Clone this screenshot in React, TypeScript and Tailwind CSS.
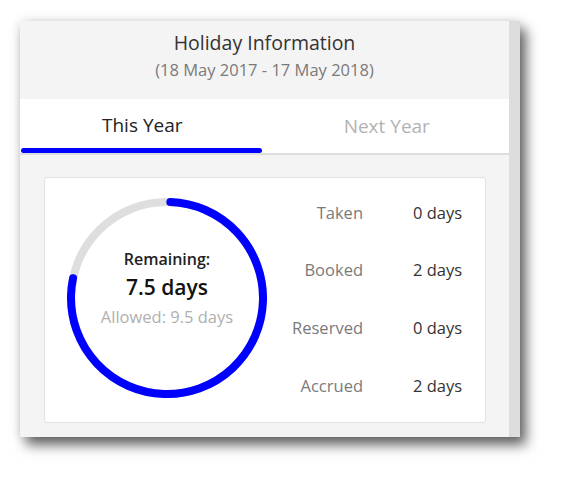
import React from 'react';

const STATS: { label: string; value: string }[] = [
    { label: 'Taken', value: '0 days' },
    { label: 'Booked', value: '2 days' },
    { label: 'Reserved', value: '0 days' },
    { label: 'Accrued', value: '2 days' },
];

const RADIUS = 96;
const CIRC = 2 * Math.PI * RADIUS;

// Ring: grey track, blue arc for remaining / allowed, starting at 12 o'clock
const RemainingRing = ({ remaining, allowed }: { remaining: number; allowed: number }) => {
    const arc = (remaining / allowed) * CIRC - 8;
    return (
        <div className="relative w-[200px] h-[200px] shrink-0">
            <svg width="200" height="200" viewBox="0 0 200 200" className="block">
                <circle cx="100" cy="100" r={RADIUS} fill="none" stroke="#dedede" strokeWidth="8" />
                <circle
                    cx="100"
                    cy="100"
                    r={RADIUS}
                    fill="none"
                    stroke="#0000ff"
                    strokeWidth="8"
                    strokeLinecap="round"
                    strokeDasharray={`${arc} ${CIRC}`}
                    transform="rotate(-88 100 100)"
                />
            </svg>
            <div className="absolute inset-0 flex flex-col items-center pt-[49px]">
                <span className="text-[16px] leading-[24px] font-semibold text-[#222222]">Remaining:</span>
                <span className="text-[21px] leading-[32px] font-semibold text-[#111111]">{remaining} days</span>
                <span className="text-[16.5px] leading-[27px] text-[#b0b0b0]">Allowed: {allowed} days</span>
            </div>
        </div>
    );
};

const App = () => {
    return (
        <div className="w-[562px] h-[480px] bg-white pt-[21px] pl-[20px] font-['Open_Sans',sans-serif]">
            <div className="flex w-[500px] h-[416px] shadow-[6px_8px_12px_rgba(0,0,0,0.6),0_0_10px_rgba(0,0,0,0.12)]">
                <div className="flex flex-col w-[489px]">
                    {/* Header */}
                    <div className="h-[78px] bg-[#f4f4f4] flex flex-col items-center pt-[9px]">
                        <span className="text-[19.5px] leading-[26px] text-[#333333]">Holiday Information</span>
                        <span className="text-[16.5px] leading-[28px] text-[#7a7a7a]">(18 May 2017 - 17 May 2018)</span>
                    </div>

                    {/* Tabs */}
                    <div className="h-[54px] bg-white flex">
                        <div className="w-1/2 flex flex-col">
                            <div className="flex-1 flex items-center justify-center pt-[4px] text-[19px] text-[#222222]">
                                This Year
                            </div>
                            <div className="h-[5px] w-[241px] ml-[1px] rounded-full bg-[#0000ff]" />
                        </div>
                        <div className="w-1/2 flex items-center justify-center text-[19px] text-[#b3b3b3]">
                            Next Year
                        </div>
                    </div>
                    <div className="h-[2px] bg-[#dddddd]" />

                    {/* Content */}
                    <div className="flex-1 bg-[#f4f4f4] pt-[22px] pl-[24px] pr-[23px]">
                        <div className="h-[246px] bg-white border border-[#e2e2e2] rounded-[3px] flex items-center pl-[22px] pb-[5px]">
                            <RemainingRing remaining={7.5} allowed={9.5} />
                            <div className="grid grid-cols-[96px_auto] gap-x-[50px] pt-[4px]">
                                {STATS.map((s) => (
                                    <React.Fragment key={s.label}>
                                        <div className="h-[57.7px] flex items-center justify-end text-[16.5px] text-[#7a7a7a]">
                                            {s.label}
                                        </div>
                                        <div className="h-[57.7px] flex items-center text-[16.5px] text-[#333333]">
                                            {s.value}
                                        </div>
                                    </React.Fragment>
                                ))}
                            </div>
                        </div>
                    </div>
                </div>
                <div className="w-[11px] bg-[#dddddd]" />
            </div>
        </div>
    );
};

export default App;
